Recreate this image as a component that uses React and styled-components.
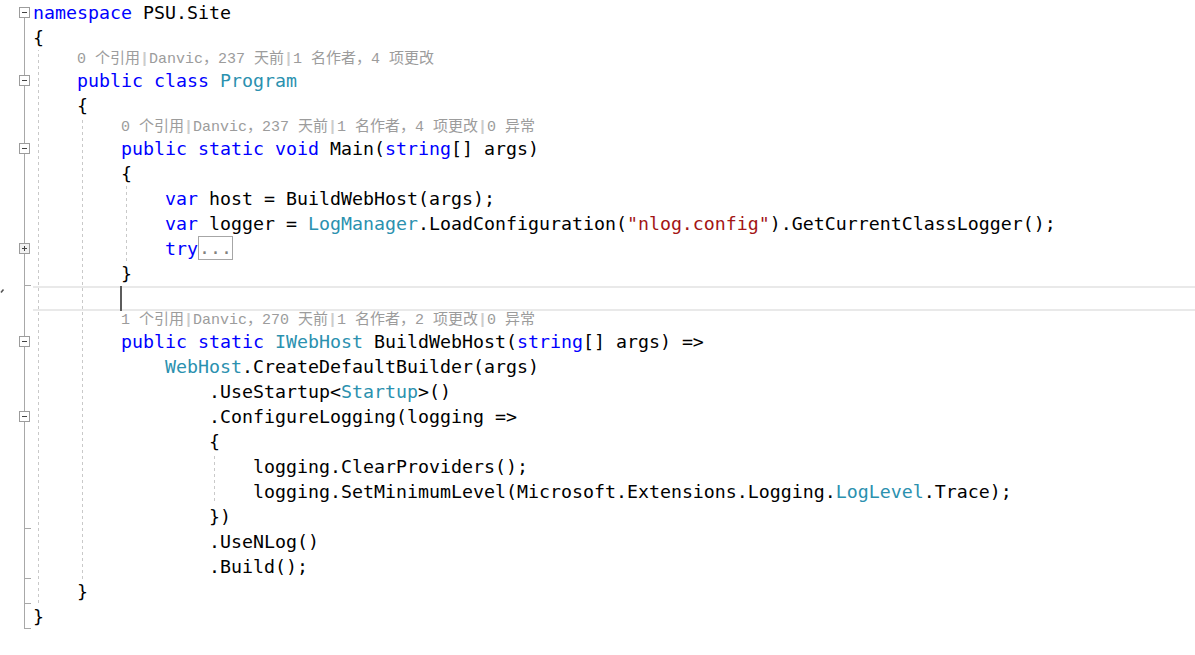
import React from "react";
import styled, { createGlobalStyle, css } from "styled-components";

const CHAR = 11;
const INDENT = CHAR * 4;
const LEFT = 33;

const GlobalStyle = createGlobalStyle`
  html, body {
    margin: 0;
    padding: 0;
    background: #ffffff;
  }
  body {
    font-family: "DejaVu Sans Mono", monospace;
  }
`;

const Editor = styled.div`
  display: flex;
  flex-direction: column;
  width: 1195px;
  height: 655px;
  overflow: hidden;
  background: #ffffff;
`;

const Row = styled.div`
  display: flex;
  flex: none;
  height: ${props => (props.$lens ? 18 : 25)}px;
`;

const Gutter = styled.svg`
  display: block;
  flex: none;
  width: ${LEFT}px;
`;

const Code = styled.div`
  flex: 1;
  display: flex;
  align-items: stretch;
  white-space: pre;
  ${props =>
    props.$current &&
    css`
      box-shadow: inset 0 2px 0 #e9e9e9, inset 0 -2px 0 #e9e9e9;
    `}
`;

const IndentCell = styled.span`
  display: block;
  flex: none;
  width: ${INDENT}px;
  ${props =>
    props.$guide &&
    css`
      background-image: linear-gradient(#c9c9c9 50%, transparent 50%);
      background-size: 1px 6px;
      background-repeat: repeat-y;
      background-attachment: fixed;
      background-position: ${props.$x}px 0;
    `}
`;

const Text = styled.span`
  display: block;
  font-family: "DejaVu Sans Mono", monospace;
  font-size: 18.27px;
  line-height: 25px;
  color: #000000;
`;

const Kw = styled.span`
  color: #0000ff;
`;

const Type = styled.span`
  color: #2b91af;
`;

const Str = styled.span`
  color: #a31515;
`;

const Collapsed = styled.span`
  display: inline-block;
  box-sizing: border-box;
  height: 24px;
  line-height: 22px;
  border: 1px solid #a6a6a6;
  color: #808080;
  vertical-align: top;
`;

const Caret = styled.span`
  display: block;
  flex: none;
  width: 2px;
  margin-left: -1px;
  background: #5c5c5c;
`;

const LensText = styled.span`
  display: block;
  padding-top: 2px;
  font-family: "Liberation Mono", "Noto Sans CJK SC", monospace;
  font-size: 15px;
  line-height: 16px;
  color: #9c9c9c;
`;

const Sep = styled.span`
  color: #cccccc;
  font-weight: bold;
`;

// fold margin drawing: box / line / end tick
const FoldMark = ({ kind, h, mark }) => {
  const c = h / 2;
  const x = 24.5;
  const boxed = kind === "first" || kind === "open" || kind === "plus";
  let top = 0;
  if (kind === "first") top = c;
  return (
    <Gutter height={h} viewBox={`0 0 ${LEFT} ${h}`}>
      {kind !== "none" && (
        <line x1={x} y1={top} x2={x} y2={h} stroke="#a8a8a8" strokeWidth="1" />
      )}
      {(kind === "end" || kind === "last") && (
        <line x1={x} y1={h - 0.5} x2={31} y2={h - 0.5} stroke="#a8a8a8" strokeWidth="1" />
      )}
      {boxed && (
        <g>
          <rect
            x="19.5"
            y={c - 5}
            width="10"
            height="10"
            fill={kind === "plus" ? "#f2f2f2" : "#ffffff"}
            stroke="#9c9c9c"
            strokeWidth="1"
          />
          <line x1="22" y1={c} x2="27" y2={c} stroke="#444" strokeWidth="1" />
          {kind === "plus" && (
            <line x1="24.5" y1={c - 2.5} x2="24.5" y2={c + 2.5} stroke="#444" strokeWidth="1" />
          )}
        </g>
      )}
      {mark && <path d="M1 6.5 L3.5 3.5" stroke="#555" strokeWidth="1.6" />}
    </Gutter>
  );
};

const Lens = ({ text }) => {
  const parts = text.split("|");
  return (
    <LensText>
      {parts.map((p, i) => (
        <React.Fragment key={i}>
          {i > 0 && <Sep>|</Sep>}
          {p}
        </React.Fragment>
      ))}
    </LensText>
  );
};

const kw = t => ({ k: "kw", t });
const ty = t => ({ k: "ty", t });
const st = t => ({ k: "st", t });
const fold = () => ({ k: "fold" });

const lines = [
  { indent: 0, fold: "first", code: [kw("namespace"), " PSU.Site"] },
  { indent: 0, fold: "line", code: ["{"] },
  { indent: 1, fold: "line", lens: "0 个引用|Danvic，237 天前|1 名作者，4 项更改" },
  { indent: 1, fold: "open", code: [kw("public"), " ", kw("class"), " ", ty("Program")] },
  { indent: 1, fold: "line", code: ["{"] },
  { indent: 2, fold: "line", lens: "0 个引用|Danvic，237 天前|1 名作者，4 项更改|0 异常" },
  {
    indent: 2,
    fold: "open",
    code: [kw("public"), " ", kw("static"), " ", kw("void"), " Main(", kw("string"), "[] args)"]
  },
  { indent: 2, fold: "line", code: ["{"] },
  { indent: 3, fold: "line", code: [kw("var"), " host = BuildWebHost(args);"] },
  {
    indent: 3,
    fold: "line",
    code: [
      kw("var"),
      " logger = ",
      ty("LogManager"),
      ".LoadConfiguration(",
      st('"nlog.config"'),
      ").GetCurrentClassLogger();"
    ]
  },
  { indent: 3, fold: "plus", code: [kw("try"), fold()] },
  { indent: 2, fold: "end", code: ["}"] },
  { indent: 2, fold: "line", cursor: true },
  { indent: 2, fold: "line", lens: "1 个引用|Danvic，270 天前|1 名作者，2 项更改|0 异常" },
  {
    indent: 2,
    fold: "open",
    code: [
      kw("public"),
      " ",
      kw("static"),
      " ",
      ty("IWebHost"),
      " BuildWebHost(",
      kw("string"),
      "[] args) =>"
    ]
  },
  { indent: 3, fold: "line", code: [ty("WebHost"), ".CreateDefaultBuilder(args)"] },
  { indent: 4, fold: "line", code: [".UseStartup<", ty("Startup"), ">()"] },
  { indent: 4, fold: "open", code: [".ConfigureLogging(logging =>"] },
  { indent: 4, fold: "line", code: ["{"] },
  { indent: 5, fold: "line", code: ["logging.ClearProviders();"] },
  {
    indent: 5,
    fold: "line",
    code: ["logging.SetMinimumLevel(Microsoft.Extensions.Logging.", ty("LogLevel"), ".Trace);"]
  },
  { indent: 4, fold: "end", code: ["})"] },
  { indent: 4, fold: "line", code: [".UseNLog()"] },
  { indent: 4, fold: "end", code: [".Build();"] },
  { indent: 1, fold: "end", code: ["}"] },
  { indent: 0, fold: "last", code: ["}"] }
];

// which indent columns show a dashed guide, by line index range
const guides = [
  { col: 0, from: 2, to: 24 },
  { col: 1, from: 5, to: 23 },
  { col: 2, from: 8, to: 10 },
  { col: 4, from: 19, to: 20 }
];

const hasGuide = (col, index) =>
  guides.some(g => g.col === col && index >= g.from && index <= g.to);

const renderToken = (tok, i) => {
  if (typeof tok === "string") return <React.Fragment key={i}>{tok}</React.Fragment>;
  if (tok.k === "kw") return <Kw key={i}>{tok.t}</Kw>;
  if (tok.k === "ty") return <Type key={i}>{tok.t}</Type>;
  if (tok.k === "st") return <Str key={i}>{tok.t}</Str>;
  if (tok.k === "fold") return <Collapsed key={i}>...</Collapsed>;
  return null;
};

const CodeLine = ({ line, index }) => {
  const h = line.lens ? 18 : 25;
  const cells = [];
  for (let c = 0; c < line.indent; c++) {
    cells.push(
      <IndentCell
        key={c}
        $guide={hasGuide(c, index)}
        $x={LEFT + c * INDENT + 5}
      />
    );
  }

  return (
    <Row $lens={!!line.lens}>
      <FoldMark kind={line.fold} h={h} mark={line.cursor} />
      <Code $current={line.cursor}>
        {cells}
        {line.lens && <Lens text={line.lens} />}
        {line.code && <Text>{line.code.map(renderToken)}</Text>}
        {line.cursor && <Caret />}
      </Code>
    </Row>
  );
};

export default function App() {
  return (
    <>
      <GlobalStyle />
      <Editor>
        {lines.map((line, i) => (
          <CodeLine key={i} line={line} index={i} />
        ))}
      </Editor>
    </>
  );
}
